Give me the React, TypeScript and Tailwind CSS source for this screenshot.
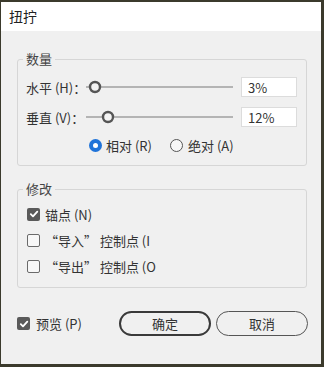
import React from "react";

const font = { fontFamily: '"Noto Sans CJK SC", "Noto Sans", sans-serif' };

function Slider({ knob }: { knob: number }) {
  return (
    <svg width="147" height="14" viewBox="0 0 147 14" className="block flex-none">
      <line x1={knob < 8 ? knob : 0} y1="7" x2="147" y2="7" stroke="#b4b4b4" strokeWidth="2" />
      <circle cx={knob} cy="7" r="5" fill="#f4f4f4" stroke="#555" strokeWidth="2.4" />
    </svg>
  );
}

function Check({ checked }: { checked: boolean }) {
  return checked ? (
    <span className="flex h-[13px] w-[13px] flex-none items-center justify-center rounded-[2px] bg-[#5a5a5a]">
      <svg width="10" height="10" viewBox="0 0 10 10">
        <path d="M1.8 5.2 L4 7.4 L8.3 2.6" fill="none" stroke="#fff" strokeWidth="1.8" strokeLinecap="round" strokeLinejoin="round" />
      </svg>
    </span>
  ) : (
    <span className="block h-[13px] w-[13px] flex-none rounded-[2px] border border-[#6a6a6a] bg-[#f7f7f7]" />
  );
}

export default function App() {
  return (
    <div style={font} className="h-[367px] w-[324px] bg-[#3b3a2c] pl-[1px] pr-[3px] pt-[2px] pb-[3px]">
      <div className="flex h-full flex-col bg-[#f0f0f0] text-[13px] text-[#333]">
        <div className="flex h-[29px] items-center bg-white pl-[8px] text-[14px] text-[#222]">扭拧</div>
        <div className="flex flex-col pl-[16px] pr-[14px] pt-[19px]">
          <fieldset className="rounded-[3px] border border-[#d6d6d6] px-0 pb-[12px]">
            <legend className="ml-[5px] px-[3px] text-[13px] leading-[18px] text-[#444]">数量</legend>
            <div className="flex flex-col gap-[10px] pl-[8px] pr-[9px] pt-[9px]">
              <div className="flex h-[20px] items-center">
                <span className="w-[60px] flex-none whitespace-nowrap leading-none">水平 (H)：</span>
                <Slider knob={9} />
                <input readOnly value="3%" className="ml-[8px] h-[20px] w-[56px] flex-none border border-[#dcdcdc] bg-white px-[6px] text-[13px] text-[#333] outline-none" />
              </div>
              <div className="flex h-[20px] items-center">
                <span className="w-[60px] flex-none whitespace-nowrap leading-none">垂直 (V)：</span>
                <Slider knob={22} />
                <input readOnly value="12%" className="ml-[8px] h-[20px] w-[56px] flex-none border border-[#dcdcdc] bg-white px-[6px] text-[13px] text-[#333] outline-none" />
              </div>
              <div className="ml-[63px] flex h-[16px] items-center">
                <span className="flex h-[13px] w-[13px] items-center justify-center rounded-full bg-[#1f73d9]">
                  <span className="h-[5px] w-[5px] rounded-full bg-white" />
                </span>
                <span className="ml-[4px] whitespace-nowrap leading-none">相对 (R)</span>
                <span className="ml-[18px] block h-[13px] w-[13px] rounded-full border border-[#555] bg-[#f7f7f7]" />
                <span className="ml-[5px] whitespace-nowrap leading-none">绝对 (A)</span>
              </div>
            </div>
          </fieldset>
          <fieldset className="mt-[14px] rounded-[3px] border border-[#d6d6d6] px-0 pb-[12px]">
            <legend className="ml-[5px] px-[3px] text-[13px] leading-[18px] text-[#444]">修改</legend>
            <div className="flex flex-col gap-[8px] pl-[9px] pt-[7px]">
              <div className="flex h-[18px] items-center">
                <Check checked />
                <span className="ml-[5px] whitespace-nowrap leading-none">锚点 (N)</span>
              </div>
              <div className="flex h-[18px] items-center">
                <Check checked={false} />
                <span className="ml-[5px] whitespace-nowrap leading-none">“导入” 控制点 (I</span>
              </div>
              <div className="flex h-[18px] items-center">
                <Check checked={false} />
                <span className="ml-[5px] whitespace-nowrap leading-none">“导出” 控制点 (O</span>
              </div>
            </div>
          </fieldset>
          <div className="mt-[23px] flex h-[25px] items-center">
            <div className="flex w-[102px] flex-none items-center">
              <Check checked />
              <span className="ml-[6px] whitespace-nowrap leading-none">预览 (P)</span>
            </div>
            <button className="flex h-[25px] w-[92px] flex-none items-center justify-center rounded-full border-2 border-[#3a3a3a] bg-[#f0f0f0] text-[13px] text-[#333]">确定</button>
            <button className="ml-[5px] flex h-[25px] w-[92px] flex-none items-center justify-center rounded-full border border-[#555] bg-[#f0f0f0] text-[13px] text-[#333]">取消</button>
          </div>
        </div>
      </div>
    </div>
  );
}
